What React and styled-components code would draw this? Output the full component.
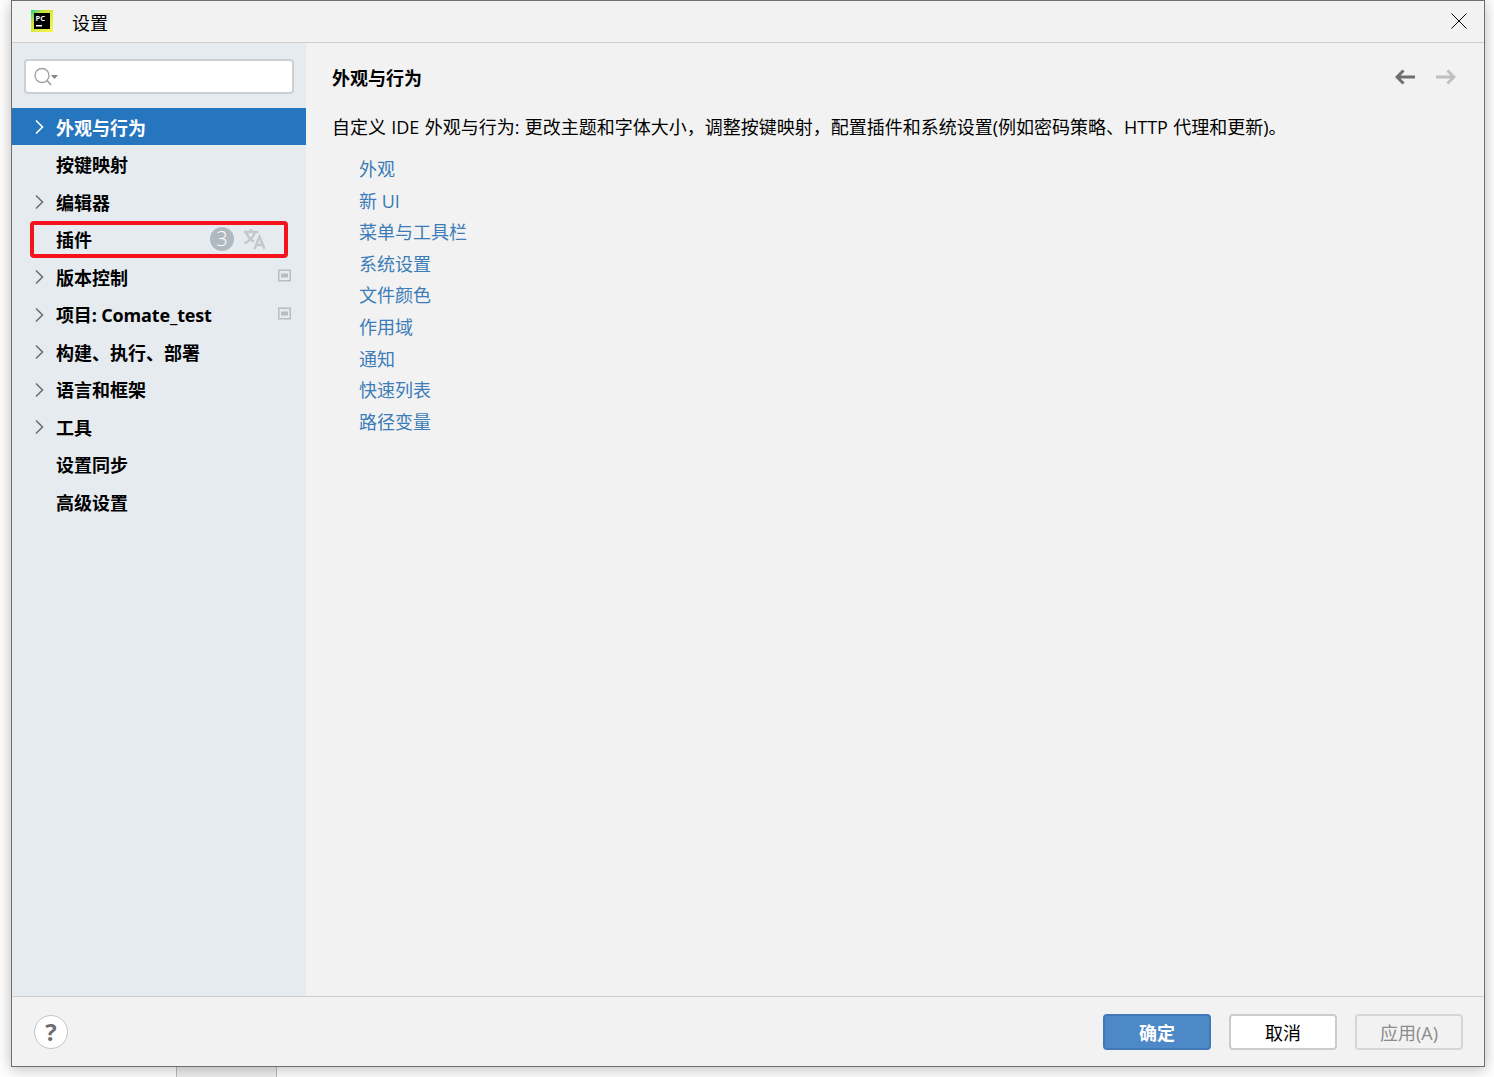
import styled, { createGlobalStyle } from "styled-components";

const GlobalStyle = createGlobalStyle`
  html, body {
    margin: 0;
    padding: 0;
    background: #ffffff;
    overflow: hidden;
  }
  body {
    font-family: "Open Sans", "Noto Sans CJK SC", sans-serif;
  }
`;

const Page = styled.div`
  width: 1494px;
  height: 1077px;
  display: flex;
  flex-direction: column;
`;

const Window = styled.div`
  width: 1474px;
  height: 1067px;
  margin-left: 11px;
  box-sizing: border-box;
  flex: none;
  display: flex;
  flex-direction: column;
  background: #f2f2f2;
  border: 1px solid #6f6f6f;
  box-shadow: 0 2px 14px rgba(0, 0, 0, 0.28);
  position: relative;
  z-index: 1;
`;

const TitleBar = styled.div`
  height: 42px;
  flex: none;
  box-sizing: border-box;
  display: flex;
  align-items: center;
  padding: 0 16px 1px 19px;
  border-bottom: 1px solid #cdcdcd;
`;

const WindowTitle = styled.div`
  margin-left: 19px;
  margin-top: 1px;
  font-size: 18px;
  color: #000000;
  flex: 1;
`;

const CloseGlyph = styled.svg`
  margin-top: -1px;
  margin-right: 1px;
`;

const Body = styled.div`
  flex: 1;
  display: flex;
  min-height: 0;
`;

const Sidebar = styled.div`
  width: 294px;
  flex: none;
  background: #e6ebf0;
  padding-top: 16px;
  box-sizing: border-box;
`;

const SearchBox = styled.div`
  width: 270px;
  height: 35px;
  margin: 0 0 14px 12px;
  box-sizing: border-box;
  display: flex;
  align-items: center;
  padding-left: 7px;
  background: #ffffff;
  border: 2px solid #ccd0d4;
  border-radius: 4px;
`;

const Row = styled.div`
  height: ${(p) => (p.$active ? "37px" : "37.5px")};
  margin-bottom: ${(p) => (p.$active ? "0.5px" : "0")};
  display: flex;
  align-items: center;
  padding-left: 44px;
  position: relative;
  box-sizing: border-box;
  font-size: 18px;
  font-weight: 700;
  letter-spacing: ${(p) => (p.$latin ? "-0.15px" : "0")};
  color: ${(p) => (p.$active ? "#ffffff" : "#000000")};
  background: ${(p) => (p.$active ? "#2675bf" : "transparent")};
`;

const Arrow = styled.svg`
  position: absolute;
  left: 22px;
  top: 11px;
`;

const RowTrail = styled.svg`
  position: absolute;
  right: 15px;
  top: 11px;
`;

const Highlight = styled.div`
  position: absolute;
  left: 18px;
  top: 0.5px;
  width: 258px;
  height: 37px;
  box-sizing: border-box;
  border: 4px solid #f5121c;
  border-radius: 4px;
`;

const Badge = styled.div`
  position: absolute;
  left: 198px;
  top: 6px;
  width: 24px;
  height: 24px;
  border-radius: 50%;
  background: #afb9c2;
  color: #ffffff;
  font-size: 20px;
  font-weight: 300;
  line-height: 23px;
  text-align: center;
`;

const Translate = styled.svg`
  position: absolute;
  left: 231px;
  top: 6px;
`;

const Content = styled.div`
  flex: 1;
  padding: 19px 28px 0 26px;
  min-width: 0;
`;

const HeaderRow = styled.div`
  display: flex;
  align-items: center;
  justify-content: space-between;
  height: 30px;
`;

const Heading = styled.div`
  font-size: 18px;
  font-weight: 700;
  color: #000000;
`;

const NavArrows = styled.div`
  display: flex;
  gap: 21px;
`;

const Description = styled.div`
  margin-top: 20px;
  height: 30px;
  line-height: 30px;
  font-size: 18px;
  color: #000000;
  white-space: nowrap;
  word-spacing: 0.6px;
`;

const LinkList = styled.div`
  margin: 12px 0 0 27px;
  display: flex;
  flex-direction: column;
`;

const LinkItem = styled.div`
  height: 31.6px;
  line-height: 31.6px;
  font-size: 18px;
  color: #3c7cb8;
`;

const Footer = styled.div`
  height: 70px;
  flex: none;
  box-sizing: border-box;
  display: flex;
  align-items: center;
  padding: 0 21px 0 22px;
  border-top: 1px solid #cdcdcd;
`;

const HelpButton = styled.div`
  width: 34px;
  height: 34px;
  box-sizing: border-box;
  border: 1px solid #c4c4c4;
  border-radius: 50%;
  background: #ffffff;
  color: #6e6e6e;
  font-size: 24px;
  font-weight: 700;
  display: flex;
  align-items: center;
  justify-content: center;
  margin-right: auto;
`;

const Button = styled.div`
  width: 108px;
  height: 36px;
  box-sizing: border-box;
  margin-left: ${(p) => (p.$primary ? "0" : "18px")};
  border-radius: 4px;
  display: flex;
  align-items: center;
  justify-content: center;
  font-size: 18px;
  font-weight: ${(p) => (p.$primary ? 700 : 400)};
  color: ${(p) => (p.$primary ? "#ffffff" : p.$disabled ? "#8c8c8c" : "#000000")};
  background: ${(p) => (p.$primary ? "#4d88c7" : p.$disabled ? "#f2f2f2" : "#ffffff")};
  border: 2px solid
    ${(p) => (p.$primary ? "#4079b6" : p.$disabled ? "#d6d6d6" : "#cccccc")};
`;

const Backdrop = styled.div`
  flex: 1;
  display: flex;
  padding-left: 176px;
`;

const BackdropTab = styled.div`
  width: 101px;
  box-sizing: border-box;
  background: #f0f0f0;
  border-left: 1px solid #bdbdbd;
  border-right: 1px solid #bdbdbd;
`;

const Logo = () => (
  <svg width="22" height="22" viewBox="0 0 22 22">
    <defs>
      <linearGradient id="pcGrad" x1="0" y1="0" x2="1" y2="1">
        <stop offset="0" stopColor="#21d789" />
        <stop offset="0.3" stopColor="#c8e23a" />
        <stop offset="1" stopColor="#fcf84a" />
      </linearGradient>
    </defs>
    <rect width="22" height="22" fill="url(#pcGrad)" />
    <rect x="3" y="3" width="16" height="16" fill="#000000" />
    <text
      x="4.5"
      y="10.5"
      fill="#ffffff"
      fontSize="7.5"
      fontWeight="700"
      fontFamily="'Open Sans', sans-serif"
    >
      PC
    </text>
    <rect x="5" y="15" width="6" height="1.5" fill="#ffffff" />
  </svg>
);

const CloseIcon = () => (
  <CloseGlyph width="16" height="16" viewBox="0 0 16 16" stroke="#000000" strokeWidth="1" fill="none">
    <path d="M0.5 0.5 L15.5 15.5 M15.5 0.5 L0.5 15.5" />
  </CloseGlyph>
);

const SearchIcon = () => (
  <svg width="26" height="20" viewBox="0 0 26 20" fill="none">
    <circle cx="9" cy="8.5" r="7" stroke="#9ea3a8" strokeWidth="1.4" />
    <path d="M14 13.5 L18 18" stroke="#9ea3a8" strokeWidth="1.8" />
    <path d="M18 8 H25 L21.5 12 Z" fill="#7f8489" />
  </svg>
);

const Chevron = ({ color }) => (
  <Arrow width="10" height="16" viewBox="0 0 10 16" fill="none">
    <path d="M2 1.5 L8.5 8 L2 14.5" stroke={color} strokeWidth="1.6" />
  </Arrow>
);

const ProjectMark = () => (
  <RowTrail width="13" height="13" viewBox="0 0 13 13">
    <rect x="0.75" y="1.25" width="11.5" height="10.5" fill="#e6ebf0" stroke="#b4bcc4" strokeWidth="1.5" />
    <rect x="3" y="4.5" width="7" height="4" fill="#b4bcc4" />
  </RowTrail>
);

const TranslateIcon = () => (
  <Translate width="24" height="24" viewBox="0 0 24 24" fill="none" stroke="#c3c8cd" strokeWidth="2.4">
    <path d="M1 5 H15 M8 2 V5 M12 5 C10.5 10 6.5 14 1.5 16.5 M3.5 6 C5 10 8 13 11 14.5" />
    <path d="M11.5 22 L16.5 9.5 L21.5 22 M13 18 H20" />
  </Translate>
);

const NavIcon = ({ color, flip }) => (
  <svg
    width="20"
    height="16"
    viewBox="0 0 20 16"
    fill="none"
    stroke={color}
    strokeWidth="3"
    style={flip ? { transform: "scaleX(-1)" } : undefined}
  >
    <path d="M20 8 H2 M8.5 1.5 L2 8 L8.5 14.5" />
  </svg>
);

const rows = [
  { label: "外观与行为", arrow: true, active: true },
  { label: "按键映射" },
  { label: "编辑器", arrow: true },
  { label: "插件", plugin: true },
  { label: "版本控制", arrow: true, mark: true },
  { label: "项目: Comate_test", arrow: true, mark: true, latin: true },
  { label: "构建、执行、部署", arrow: true },
  { label: "语言和框架", arrow: true },
  { label: "工具", arrow: true },
  { label: "设置同步" },
  { label: "高级设置" },
];

const links = [
  "外观",
  "新 UI",
  "菜单与工具栏",
  "系统设置",
  "文件颜色",
  "作用域",
  "通知",
  "快速列表",
  "路径变量",
];

const App = () => {
  return (
    <Page>
      <GlobalStyle />
      <Window>
        <TitleBar>
          <Logo />
          <WindowTitle>设置</WindowTitle>
          <CloseIcon />
        </TitleBar>
        <Body>
          <Sidebar>
            <SearchBox>
              <SearchIcon />
            </SearchBox>
            {rows.map((row) => (
              <Row key={row.label} $active={row.active} $latin={row.latin}>
                {row.arrow && <Chevron color={row.active ? "#ffffff" : "#6e6e6e"} />}
                {row.label}
                {row.mark && <ProjectMark />}
                {row.plugin && (
                  <>
                    <Badge>3</Badge>
                    <TranslateIcon />
                    <Highlight />
                  </>
                )}
              </Row>
            ))}
          </Sidebar>
          <Content>
            <HeaderRow>
              <Heading>外观与行为</Heading>
              <NavArrows>
                <NavIcon color="#6e6e6e" />
                <NavIcon color="#c0c0c0" flip />
              </NavArrows>
            </HeaderRow>
            <Description>
              自定义 IDE 外观与行为: 更改主题和字体大小，调整按键映射，配置插件和系统设置(例如密码策略、HTTP 代理和更新)。
            </Description>
            <LinkList>
              {links.map((link) => (
                <LinkItem key={link}>{link}</LinkItem>
              ))}
            </LinkList>
          </Content>
        </Body>
        <Footer>
          <HelpButton>?</HelpButton>
          <Button $primary>确定</Button>
          <Button>取消</Button>
          <Button $disabled>应用(A)</Button>
        </Footer>
      </Window>
      <Backdrop>
        <BackdropTab />
      </Backdrop>
    </Page>
  );
};

export default App;
